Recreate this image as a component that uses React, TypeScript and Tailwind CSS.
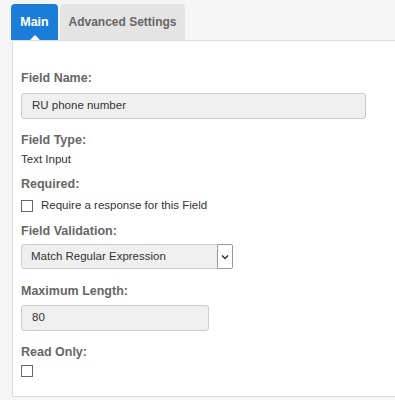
import { useState } from "react";

const Label = ({ children }: { children: React.ReactNode }) => (
  <div className="text-[12.5px] font-bold text-[#666] leading-[16px]">{children}</div>
);

const App = () => {
  const [tab, setTab] = useState("main");
  const [required, setRequired] = useState(false);
  const [readOnly, setReadOnly] = useState(false);

  return (
    <div
      className="w-[395px] h-[400px] bg-[#f5f5f5] pt-[4px] pl-[11px]"
      style={{ fontFamily: '"Liberation Sans", Arial, sans-serif' }}
    >
      <div className="flex h-[36px]">
        <button
          onClick={() => setTab("main")}
          className="relative w-[47px] h-[36px] bg-[#1a7dd7] text-white text-[12.5px] font-bold rounded-t-[4px]"
        >
          Main
          <span className="absolute left-1/2 -translate-x-1/2 bottom-0 w-0 h-0 border-l-[5px] border-r-[5px] border-b-[5px] border-l-transparent border-r-transparent border-b-white" />
        </button>
        <button
          onClick={() => setTab("advanced")}
          className="ml-[2px] w-[125px] h-[36px] bg-[#e4e4e4] text-[#666] text-[12px] font-bold rounded-t-[4px]"
        >
          Advanced Settings
        </button>
      </div>

      <div className="ml-[1px] h-[357px] bg-white border border-[#ddd] border-r-0 pl-[8px] pt-[29px]">
        {tab === "main" && (
          <div className="flex flex-col">
            <Label>Field Name:</Label>
            <div className="mt-[7px] w-[345px] h-[26px] bg-[#efefef] border border-[#ccc] rounded-[3px] pl-[10px] flex items-center text-[11.5px] text-[#333]">
              RU phone number
            </div>

            <div className="mt-[13px]">
              <Label>Field Type:</Label>
            </div>
            <div className="mt-[4px] text-[11.5px] text-[#333] leading-[15px]">Text Input</div>

            <div className="mt-[9px]">
              <Label>Required:</Label>
            </div>
            <label className="mt-[6px] flex items-center gap-[8px] text-[11.5px] text-[#333] leading-[15px]">
              <span
                onClick={() => setRequired(!required)}
                className="w-[12px] h-[12px] border border-[#666] bg-white flex items-center justify-center text-[10px]"
              >
                {required ? "✓" : ""}
              </span>
              Require a response for this Field
            </label>

            <div className="mt-[10px]">
              <Label>Field Validation:</Label>
            </div>
            <div className="mt-[5px] w-[212px] h-[25px] flex bg-[#efefef] border border-[#ccc] rounded-[3px]">
              <div className="flex-1 pl-[9px] flex items-center text-[11.5px] text-[#333]">
                Match Regular Expression
              </div>
              <div className="w-[16px] bg-white border border-[#999] rounded-[2px] -my-px -mr-px flex items-center justify-center">
                <svg width="8" height="6" viewBox="0 0 8 6">
                  <path d="M1 1.5 L4 4.5 L7 1.5" fill="none" stroke="#333" strokeWidth="1.5" />
                </svg>
              </div>
            </div>

            <div className="mt-[14px]">
              <Label>Maximum Length:</Label>
            </div>
            <div className="mt-[6px] w-[188px] h-[26px] bg-[#efefef] border border-[#ccc] rounded-[3px] pl-[10px] flex items-center text-[11.5px] text-[#333]">
              80
            </div>

            <div className="mt-[13px]">
              <Label>Read Only:</Label>
            </div>
            <span
              onClick={() => setReadOnly(!readOnly)}
              className="mt-[5px] w-[12px] h-[12px] border border-[#666] bg-white flex items-center justify-center text-[10px]"
            >
              {readOnly ? "✓" : ""}
            </span>
          </div>
        )}
      </div>
    </div>
  );
};

export default App;
